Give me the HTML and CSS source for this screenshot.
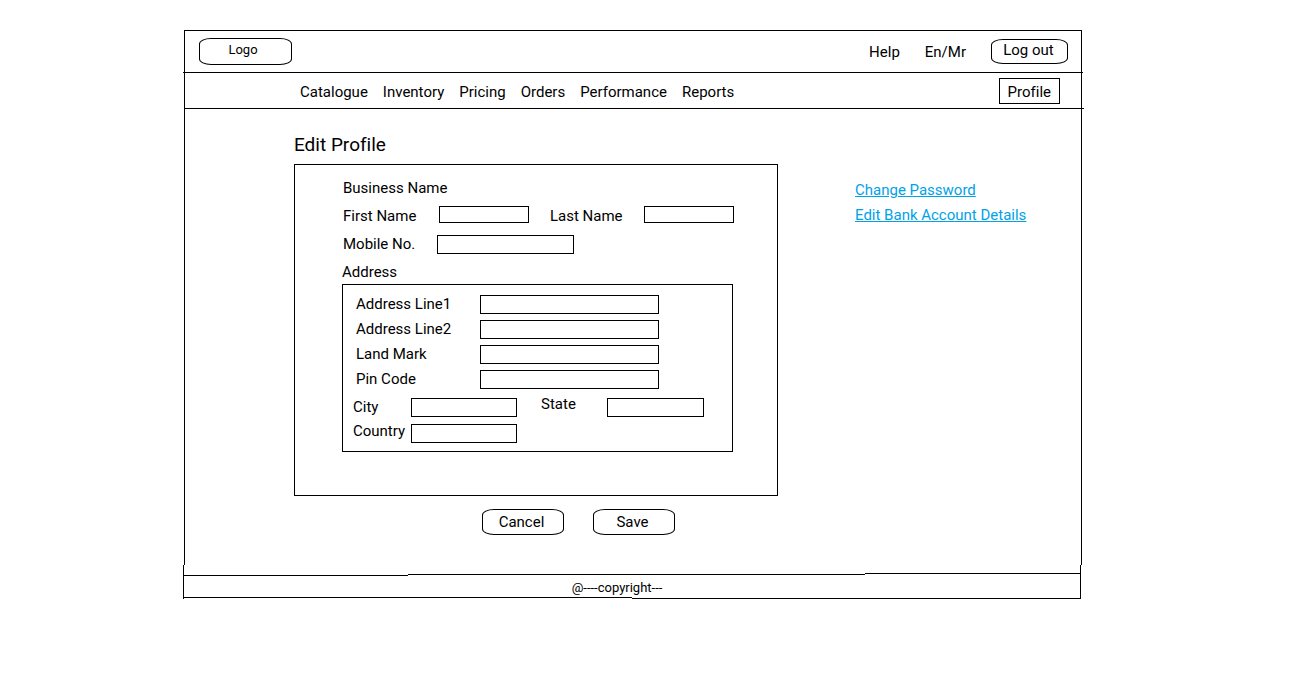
FILE: index.html
```html
<!DOCTYPE html>
<html lang="en">
<head>
<meta charset="utf-8">
<title>Edit Profile</title>
<link rel="stylesheet" href="styles.css">
</head>
<body>
<div class="page">
  <div class="frame">
    <header class="topbar">
      <a class="logo" href="#">Logo</a>
      <div class="tools">
        <a href="#">Help</a>
        <a href="#">En/Mr</a>
        <button class="btn btn-logout" type="button">Log out</button>
      </div>
    </header>
    <nav class="nav">
      <div class="nav-links">
        <a href="#">Catalogue</a>
        <a href="#">Inventory</a>
        <a href="#">Pricing</a>
        <a href="#">Orders</a>
        <a href="#">Performance</a>
        <a href="#">Reports</a>
      </div>
      <a class="profile" href="#">Profile</a>
    </nav>
    <main class="main">
      <form class="form">
        <h1 class="title">Edit Profile</h1>
        <div class="panel">
          <div class="row">Business Name</div>
          <div class="row names">
            <label for="first">First Name</label>
            <input id="first" type="text">
            <label class="second" for="last">Last Name</label>
            <input id="last" type="text">
          </div>
          <div class="row mobile">
            <label for="mobile">Mobile No.</label>
            <input id="mobile" type="tel">
          </div>
          <div class="row" id="address">Address</div>
          <div class="address" role="group" aria-labelledby="address">
            <div class="lines">
              <label for="line1">Address Line1</label>
              <input id="line1" type="text">
              <label for="line2">Address Line2</label>
              <input id="line2" type="text">
              <label for="landmark">Land Mark</label>
              <input id="landmark" type="text">
              <label for="pin">Pin Code</label>
              <input id="pin" type="text">
            </div>
            <div class="places">
              <label for="city">City</label>
              <input id="city" type="text">
              <label class="second raised" for="state">State</label>
              <input id="state" type="text">
              <label class="raised" for="country">Country</label>
              <input id="country" type="text">
            </div>
          </div>
        </div>
        <div class="actions">
          <button class="btn" type="button">Cancel</button>
          <button class="btn" type="submit">Save</button>
        </div>
      </form>
      <aside class="side">
        <a href="#">Change Password</a>
        <a href="#">Edit Bank Account Details</a>
      </aside>
    </main>
  </div>
  <footer class="footer">@----copyright---</footer>
</div>
</body>
</html>
```
FILE: styles.css
```css
* {
  box-sizing: border-box;
}

body {
  margin: 0;
  background: #fff;
  color: #000;
  font: 15px/20px Roboto, "Liberation Sans", sans-serif;
  font-variant-ligatures: none;
}

a {
  color: inherit;
  text-decoration: none;
}

input {
  width: 100%;
  min-width: 0;
  height: 19px;
  margin: 0;
  padding: 0 4px;
  border: 1px solid #000;
  border-radius: 0;
  background: #fff;
  font: inherit;
}

.page {
  padding: 30px 226px 30px 184px;
}

.frame {
  border: 1px solid #000;
  border-bottom: 0;
}

/* The rules run slightly past the frame on both sides. */
.topbar {
  display: flex;
  align-items: center;
  justify-content: space-between;
  height: 42px;
  margin: 0 -2px;
  padding: 0 15px 0 16px;
  border-bottom: 1px solid #000;
}

.logo,
.btn {
  display: flex;
  align-items: center;
  justify-content: center;
  border: 1px solid #000;
  border-radius: 12px / 6px;
  background: #fff;
}

.logo {
  width: 93px;
  height: 27px;
  padding: 0 5px 4px 0;
  font-size: 13px;
}

.btn {
  width: 82px;
  height: 26px;
  padding: 0 3px 0 0;
  color: inherit;
  font: inherit;
}

.btn-logout {
  width: 77px;
  height: 25px;
  padding: 0 2px 3px 0;
}

.tools {
  display: flex;
  align-items: center;
  gap: 25px;
}

.nav {
  display: flex;
  align-items: center;
  justify-content: space-between;
  height: 36px;
  margin: 0 -3px 0 -1px;
  padding: 0 24px 0 116px;
  border-bottom: 1px solid #000;
}

.nav-links {
  display: flex;
  gap: 15px;
  padding-top: 2px;
}

.profile {
  padding: 3px 8px 1px;
  border: 1px solid #000;
}

.main {
  display: grid;
  grid-template-columns: minmax(0, 484px) 1fr;
  gap: 77px;
  padding: 24px 0 30px 109px;
}

.title {
  margin: 0 0 7px;
  font-size: 19px;
  font-weight: 400;
  line-height: 24px;
}

.panel {
  padding: 13px 43px 43px 47px;
  border: 1px solid #000;
}

.row {
  min-height: 20px;
  margin-bottom: 8px;
  padding-left: 1px;
}

.names,
.mobile,
.places {
  display: grid;
  align-items: center;
}

.names {
  grid-template-columns: 96px 1fr 21px 94px 1fr;
}

.names input {
  align-self: start;
  height: 17px;
}

.second {
  grid-column: 4;
}

.mobile {
  grid-template-columns: 94px 137px;
}

#address {
  margin-bottom: 2px;
  padding-left: 0;
}

.address {
  margin-right: 1px;
  padding: 9px 0 8px;
  border: 1px solid #000;
}

.lines {
  display: grid;
  grid-template-columns: 124px 179px;
  align-items: center;
  row-gap: 5px;
  padding-left: 13px;
}

.places {
  grid-template-columns: 58px 106px 24px 66px 97px;
  row-gap: 7px;
  margin-top: 8px;
  padding-left: 10px;
}

.places .raised {
  align-self: start;
  line-height: 14px;
}

.actions {
  display: flex;
  gap: 29px;
  margin-top: 13px;
  padding-left: 188px;
}

.side {
  display: flex;
  flex-direction: column;
  align-items: flex-start;
  padding-top: 45px;
  color: #00a2e8;
  line-height: 25px;
}

.side a {
  text-decoration: underline;
}

/* The top and bottom rules are drawn as short steps. */
.footer {
  height: 34px;
  margin: 0 1px 0 -1px;
  padding-top: 13px;
  padding-right: 30px;
  border: solid #000;
  border-width: 0 1px;
  background:
    linear-gradient(#000, #000) 0 10px / 25% 1px,
    linear-gradient(#000, #000) 51% 9px / 51% 1px,
    linear-gradient(#000, #000) 100% 8px / 24% 1px,
    linear-gradient(#000, #000) 0 32px / 50% 1px,
    linear-gradient(#000, #000) 100% 33px / 50% 1px;
  background-repeat: no-repeat;
  font-size: 13px;
  text-align: center;
}
```
